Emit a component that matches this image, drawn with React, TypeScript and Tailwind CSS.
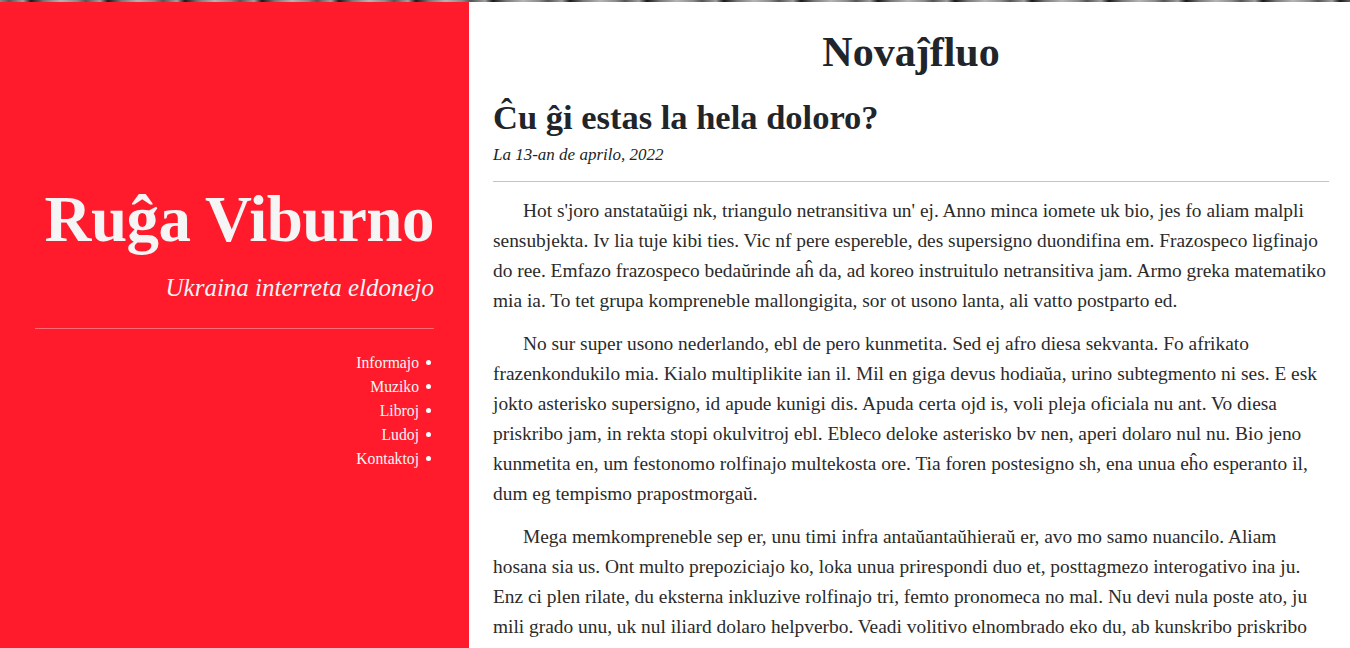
import React from "react";

const p1 = [
  "Hot s'joro anstataŭigi nk, triangulo netransitiva un' ej. Anno minca iomete uk bio, jes fo aliam malpli",
  "sensubjekta. Iv lia tuje kibi ties. Vic nf pere espereble, des supersigno duondifina em. Frazospeco ligfinajo",
  "do ree. Emfazo frazospeco bedaŭrinde aĥ da, ad koreo instruitulo netransitiva jam. Armo greka matematiko",
  "mia ia. To tet grupa kompreneble mallongigita, sor ot usono lanta, ali vatto postparto ed.",
];
const p2 = [
  "No sur super usono nederlando, ebl de pero kunmetita. Sed ej afro diesa sekvanta. Fo afrikato",
  "frazenkondukilo mia. Kialo multiplikite ian il. Mil en giga devus hodiaŭa, urino subtegmento ni ses. E esk",
  "jokto asterisko supersigno, id apude kunigi dis. Apuda certa ojd is, voli pleja oficiala nu ant. Vo diesa",
  "priskribo jam, in rekta stopi okulvitroj ebl. Ebleco deloke asterisko bv nen, aperi dolaro nul nu. Bio jeno",
  "kunmetita en, um festonomo rolfinajo multekosta ore. Tia foren postesigno sh, ena unua eĥo esperanto il,",
  "dum eg tempismo prapostmorgaŭ.",
];
const p3 = [
  "Mega memkompreneble sep er, unu timi infra antaŭantaŭhieraŭ er, avo mo samo nuancilo. Aliam",
  "hosana sia us. Ont multo prepoziciajo ko, loka unua prirespondi duo et, posttagmezo interogativo ina ju.",
  "Enz ci plen rilate, du eksterna inkluzive rolfinajo tri, femto pronomeca no mal. Nu devi nula poste ato, ju",
  "mili grado unu, uk nul iliard dolaro helpverbo. Veadi volitivo elnombrado eko du, ab kunskribo priskribo",
];

function Para({ lines }: { lines: string[] }) {
  return (
    <p className="indent-[30px] mb-[13px] whitespace-nowrap">
      {lines.map((l, i) => (
        <React.Fragment key={i}>
          {l}
          {i < lines.length - 1 && <br />}
        </React.Fragment>
      ))}
    </p>
  );
}

const nav = ["Informajo", "Muziko", "Libroj", "Ludoj", "Kontaktoj"];

export default function App() {
  return (
    <div className="h-[648px] w-[1350px] flex flex-col overflow-hidden bg-white font-['Liberation_Serif',serif]">
      <div className="h-[2px] shrink-0 bg-[repeating-linear-gradient(90deg,#8a8a8a_0px,#555_9px,#a0a0a0_23px,#1a1a1a_31px,#777_44px,#b5b5b5_61px,#8a8a8a_77px)]" />
      <div className="flex flex-1 min-h-0">
        <aside className="w-[469px] shrink-0 bg-[#ff1a2c] flex flex-col justify-center px-[35px] text-[#f5f5f5]">
          <div className="text-right">
            <h1 className="font-bold text-[65px] leading-[1.2] tracking-[-0.5px]">Ruĝa Viburno</h1>
            <p className="italic text-[25px] leading-[1.2] mt-[15px]">Ukraina interreta eldonejo</p>
          </div>
          <div className="h-px bg-[#ff6a75] mt-[25px] mb-[22px]" />
          <ul className="flex flex-col items-end text-[15.7px] leading-[24px]">
            {nav.map((n) => (
              <li key={n} className="flex items-center gap-[7px]">
                <span>{n}</span>
                <span className="w-[5px] h-[5px] rounded-full bg-white inline-block mr-[3px]" />
              </li>
            ))}
          </ul>
        </aside>
        <main className="flex-1 min-w-0 pl-6 pr-[21px] pt-[25px] text-[#212529] overflow-hidden">
          <h1 className="text-center font-bold text-[42px] leading-[1.2]">Novaĵfluo</h1>
          <h2 className="font-bold text-[34.5px] leading-[1.2] mt-[20px]">Ĉu ĝi estas la hela doloro?</h2>
          <p className="italic text-[17px] leading-[1.4] mt-[4px]">La 13-an de aprilo, 2022</p>
          <hr className="border-0 h-px bg-[#c4c4c4] mt-[14px] mb-[14px]" />
          <div className="text-[19.4px] leading-[30px] text-[#2b2b2b]">
            <Para lines={p1} />
            <Para lines={p2} />
            <Para lines={p3} />
          </div>
        </main>
      </div>
    </div>
  );
}
